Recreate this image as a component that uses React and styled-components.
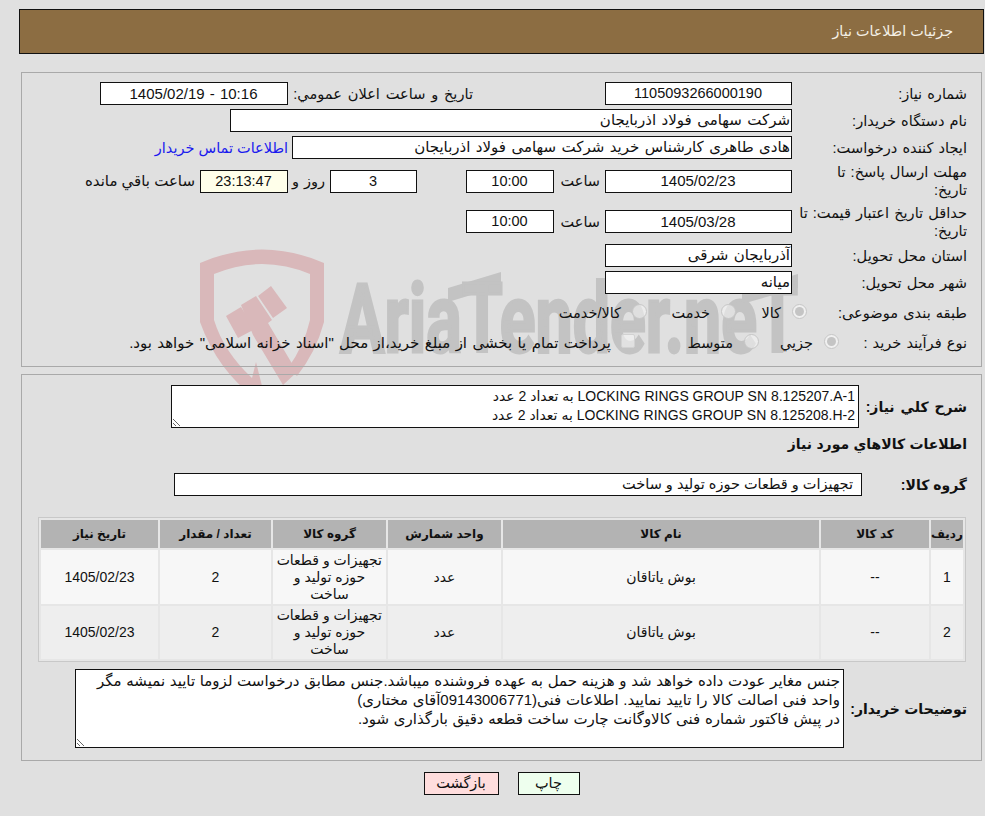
import React from "react";
import styled, { createGlobalStyle } from "styled-components";

const Global = createGlobalStyle`
  html, body { margin: 0; padding: 0; background: #e0e0e0; }
  body { font-family: "Liberation Sans", "DejaVu Sans", sans-serif; font-size: 14.5px; word-spacing: 1px; color: #111; }
  * { box-sizing: border-box; }
`;

const FONT = `"Liberation Sans", "DejaVu Sans", sans-serif`;

const Page = styled.div`
  position: relative;
  width: 985px;
  height: 816px;
  overflow: hidden;
  direction: rtl;
  padding: 9px 1px 0 19px;
`;
const Mark = styled.svg`
  position: absolute;
  left: 0;
  top: 0;
  width: 985px;
  height: 816px;
  pointer-events: none;
`;
const Content = styled.div`
  position: relative;
  display: flex;
  flex-direction: column;
  align-items: stretch;
`;
const Header = styled.header`
  height: 45px;
  background: #8c6d42;
  border: 1px solid #111;
  color: #f4f0e6;
  display: flex;
  align-items: center;
  padding-right: 30px;
  padding-bottom: 2px;
  word-spacing: 0;
  font-size: 14.3px;
`;
const Panel = styled.section`
  border: 1px solid #a9a9a9;
  margin: ${(p) => p.$top}px 2px 0 2px;
  height: ${(p) => p.$h}px;
  padding-top: ${(p) => p.$pad}px;
  display: flex;
  flex-direction: column;
`;
const Row = styled.div`
  display: flex;
  align-items: center;
  height: ${(p) => p.$h || 27}px;
  margin-top: ${(p) => p.$top || 0}px;
  flex: none;
`;
const Label = styled.div`
  width: ${(p) => p.$w || 189}px;
  padding-right: ${(p) => p.$pr || 14}px;
  line-height: 18px;
  flex: none;
  white-space: nowrap;
  font-weight: ${(p) => (p.$bold ? 700 : 400)};
  font-size: ${(p) => (p.$bold ? 14 : 14.6)}px;
  word-spacing: ${(p) => (p.$ws === undefined ? 1 : p.$ws)}px;
`;
const Field = styled.div`
  width: ${(p) => p.$w}px;
  height: 23px;
  flex: none;
  background: ${(p) => p.$bg || "#fff"};
  border: 1px solid #111;
  display: flex;
  align-items: center;
  justify-content: ${(p) => (p.$start ? "flex-start" : "center")};
  padding: 0 ${(p) => p.$inset || 1}px 1px 0;
  font-size: ${(p) => p.$size || (p.$start ? 15 : 14.5)}px;
  word-spacing: ${(p) => (p.$ws === undefined ? 1.3 : p.$ws)}px;
  white-space: nowrap;
  overflow: hidden;
  margin-right: ${(p) => p.$before || 0}px;
`;
const Text = styled.span`
  flex: none;
  width: ${(p) => (p.$w ? `${p.$w}px` : "auto")};
  margin-right: ${(p) => p.$before || 0}px;
  font-size: ${(p) => p.$size || 14.5}px;
  word-spacing: ${(p) => (p.$ws === undefined ? 1 : p.$ws)}px;
  white-space: nowrap;
`;
const Link = styled.a`
  color: #1a1aee;
  margin-right: 4px;
  white-space: nowrap;
  word-spacing: 0;
`;
const Choice = styled.label`
  display: flex;
  align-items: center;
  flex: none;
  width: ${(p) => p.$w}px;
  white-space: nowrap;
  gap: ${(p) => p.$gap || 12}px;
  font-size: ${(p) => p.$size || 14.5}px;
  word-spacing: ${(p) => p.$ws || 1}px;
`;
const Radio = styled.span`
  width: 15px;
  height: 15px;
  margin: -2px -1px 2px;
  border-radius: 50%;
  flex: none;
  border: 1px solid #c6c6c6;
  background: ${(p) => (p.$on ? "#f0f0f0" : "rgba(245, 245, 245, 0.55)")};
  display: flex;
  align-items: center;
  justify-content: center;
  &::after {
    content: "";
    width: 9px;
    height: 9px;
    border-radius: 50%;
    background: ${(p) => (p.$on ? "#c4c4c4" : "transparent")};
  }
`;
const Check = styled.span`
  width: 14px;
  height: 14px;
  margin-top: -4px;
  flex: none;
  border: 1px solid #d2d2d2;
  background: rgba(245, 245, 245, 0.6);
  border-radius: 2px;
`;
const Area = styled.textarea`
  display: block;
  flex: none;
  width: ${(p) => p.$w}px;
  height: ${(p) => p.$h}px;
  border: 1px solid #111;
  border-radius: 0;
  background: #fff;
  padding: 1px 3px;
  margin: 0;
  font-family: ${FONT};
  font-size: ${(p) => p.$size || 14.5}px;
  word-spacing: ${(p) => p.$ws || 0}px;
  line-height: 19px;
  color: #111;
  direction: rtl;
  overflow: hidden;
  outline: none;
`;
const TableWrap = styled.div`
  margin: 8px 15px 0 15px;
  flex: none;
`;
const Table = styled.table`
  width: 928px;
  table-layout: fixed;
  border-collapse: separate;
  border-spacing: 2px;
  border: 1px solid #c8c8c8;
  background: #e6e6e6;
  margin: 0;
`;
const Th = styled.th`
  background: #b3b3b3;
  height: 28px;
  padding: 0;
  font-size: 12px;
  word-spacing: 0;
  font-weight: 700;
  text-align: center;
`;
const Td = styled.td`
  background: ${(p) => (p.$alt ? "#eeeeee" : "#f7f7f7")};
  height: ${(p) => p.$h}px;
  padding: 0 4px;
  font-size: 14px;
  line-height: 17px;
  text-align: center;
  white-space: nowrap;
  word-spacing: 0;
`;
const Buttons = styled.div`
  display: flex;
  justify-content: center;
  gap: 19px;
  margin-top: 11px;
`;
const Button = styled.button`
  height: 23px;
  width: ${(p) => p.$w}px;
  border: 1px solid #111;
  background: ${(p) => p.$bg};
  font-family: ${FONT};
  font-size: 14.5px;
  color: #111;
  padding: 0 0 1px;
`;

const rows = [
  { n: 1, alt: false, h: 54 },
  { n: 2, alt: true, h: 53 },
];
const notes =
  "جنس مغایر عودت داده خواهد شد و هزینه حمل به عهده فروشنده میباشد.جنس مطابق درخواست لزوما تایید نمیشه مگر واحد فنی اصالت کالا را تایید نمایید. اطلاعات فنی(09143006771آقای مختاری)\nدر پیش فاکتور شماره فنی کالاوگانت چارت ساخت قطعه دقیق بارگذاری شود.";
const summary =
  "LOCKING RINGS GROUP SN 8.125207.A-1 به تعداد 2 عدد\nLOCKING RINGS GROUP SN 8.125208.H-2 به تعداد 2 عدد";

export default function App() {
  return (
    <Page>
      <Global />
      <Mark viewBox="0 0 985 816">
        <path
          fill="#d9b8ba"
          fillRule="evenodd"
          d="M200 263 Q262 236 324 263 L324 322 Q316 352 297 376 L288 368 Q304 346 310 320 L310 274 Q262 254 214 274 L214 320 Q224 352 252 378 L256 362 L262 386 L258 400 Q218 372 200 322 Z"
        />
        <polygon fill="#d9b8ba" points="226,316 241,307 255,329 238,338" />
        <polygon fill="#d9b8ba" points="241,305 256,296 272,320 268,323 297,372 283,385 253,335" />
        <polygon fill="#d9b8ba" points="258,296 271,286 287,308 273,318" />
        <polygon fill="#c3c3c3" points="448,288 501,272 501,286 448,302" />
        <polygon fill="#c3c3c3" points="742,290 798,274 798,288 742,304" />
        <text
          x="340"
          y="352"
          fill="#c3c3c3"
          stroke="#c3c3c3"
          strokeWidth="3"
          fontFamily="Roboto, sans-serif"
          fontWeight="700"
          fontSize="96"
          textLength="458"
          lengthAdjust="spacingAndGlyphs"
          style={{ direction: "ltr", unicodeBidi: "bidi-override", wordSpacing: 0 }}
        >
          AriaTender.neT
        </text>
      </Mark>
      <Content>
        <Header>جزئیات اطلاعات نیاز</Header>
        <Panel $top={18} $h={295} $pad={7}>
          <Row>
            <Label>شماره نیاز:</Label>
            <Field $w={187}>1105093266000190</Field>
            <Label $w={317} $pr={132} $ws={1.7}>تاریخ و ساعت اعلان عمومي:</Label>
            <Field $w={188} $size={15} $ws={1}>10:16 - 1405/02/19</Field>
          </Row>
          <Row>
            <Label>نام دستگاه خریدار:</Label>
            <Field $w={562} $start>شرکت سهامی فولاد اذربایجان</Field>
          </Row>
          <Row>
            <Label>ایجاد کننده درخواست:</Label>
            <Field $w={500} $start>هادی طاهری کارشناس خرید شرکت سهامی فولاد اذربایجان</Field>
            <Link>اطلاعات تماس خریدار</Link>
          </Row>
          <Row $h={40}>
            <Label>مهلت ارسال پاسخ: تا<br />تاریخ:</Label>
            <Field $w={187} $size={15}>1405/02/23</Field>
            <Text $w={46} $before={5}>ساعت</Text>
            <Field $w={88}>10:00</Field>
            <Field $w={87} $before={49}>3</Field>
            <Text $w={28} $before={5}>روز و</Text>
            <Field $w={88} $bg="#ffffea" $before={9}>23:13:47</Field>
            <Text $before={5} $size={15} $ws={0}>ساعت باقي مانده</Text>
          </Row>
          <Row $h={41}>
            <Label>حداقل تاریخ اعتبار قیمت: تا<br />تاریخ:</Label>
            <Field $w={187} $size={15}>1405/03/28</Field>
            <Text $w={46} $before={5}>ساعت</Text>
            <Field $w={88}>10:00</Field>
          </Row>
          <Row>
            <Label>استان محل تحویل:</Label>
            <Field $w={187} $start>آذربایجان شرقی</Field>
          </Row>
          <Row>
            <Label>شهر محل تحویل:</Label>
            <Field $w={187} $start>میانه</Field>
          </Row>
          <Row $h={34}>
            <Label $w={175}>طبقه بندی موضوعی:</Label>
            <Choice $w={71}><Radio $on />کالا</Choice>
            <Choice $w={89}><Radio />خدمت</Choice>
            <Choice $w={120}><Radio />کالا/خدمت</Choice>
          </Row>
          <Row $h={26}>
            <Label $w={143}>نوع فرآیند خرید :</Label>
            <Choice $w={80}><Radio $on />جزيي</Choice>
            <Choice $w={123}><Radio />متوسط</Choice>
            <Choice $w={500} $gap={10} $size={15} $ws={1.2}><Check />پرداخت تمام یا بخشی از مبلغ خرید،از محل "اسناد خزانه اسلامی" خواهد بود.</Choice>
          </Row>
        </Panel>
        <Panel $top={7} $h={387} $pad={10}>
          <Row $h={43}>
            <Label $w={122} $bold $ws={2}>شرح کلي نياز:</Label>
            <Area $w={688} $h={43} $size={14} readOnly value={summary} />
          </Row>
          <Row $h={32}>
            <Label $w={400} $bold $ws={0.5}>اطلاعات کالاهاي مورد نياز</Label>
          </Row>
          <Row $h={49}>
            <Label $w={119} $bold $ws={0}>گروه کالا:</Label>
            <Field $w={688} $start $inset={8} $size={14.5} $ws={0}>تجهیزات و قطعات حوزه تولید و ساخت</Field>
          </Row>
          <TableWrap>
            <Table>
              <colgroup>
                <col style={{ width: 32 }} />
                <col style={{ width: 108 }} />
                <col style={{ width: 316 }} />
                <col style={{ width: 113 }} />
                <col style={{ width: 113 }} />
                <col style={{ width: 111 }} />
                <col style={{ width: 117 }} />
              </colgroup>
              <thead>
                <tr>
                  <Th>ردیف</Th>
                  <Th>کد کالا</Th>
                  <Th>نام کالا</Th>
                  <Th>واحد شمارش</Th>
                  <Th>گروه کالا</Th>
                  <Th>تعداد / مقدار</Th>
                  <Th>تاریخ نیاز</Th>
                </tr>
              </thead>
              <tbody>
                {rows.map((r) => (
                  <tr key={r.n}>
                    <Td $alt={r.alt} $h={r.h}>{r.n}</Td>
                    <Td $alt={r.alt} $h={r.h}>--</Td>
                    <Td $alt={r.alt} $h={r.h}>بوش یاتاقان</Td>
                    <Td $alt={r.alt} $h={r.h}>عدد</Td>
                    <Td $alt={r.alt} $h={r.h}>تجهیزات و قطعات<br />حوزه تولید و<br />ساخت</Td>
                    <Td $alt={r.alt} $h={r.h}>2</Td>
                    <Td $alt={r.alt} $h={r.h}>1405/02/23</Td>
                  </tr>
                ))}
              </tbody>
            </Table>
          </TableWrap>
          <Row $h={79} $top={7}>
            <Label $w={137} $bold $ws={0.5}>توضیحات خریدار:</Label>
            <Area $w={769} $h={79} $size={15} $ws={0.5} readOnly value={notes} />
          </Row>
        </Panel>
        <Buttons>
          <Button $w={62} $bg="#eeffee">چاپ</Button>
          <Button $w={75} $bg="#ffdddd">بازگشت</Button>
        </Buttons>
      </Content>
    </Page>
  );
}
